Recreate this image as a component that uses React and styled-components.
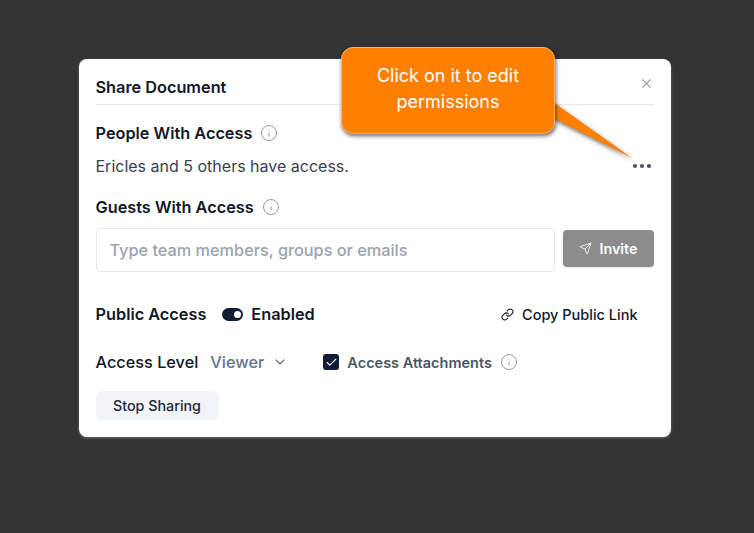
import React from 'react'
import styled, { createGlobalStyle } from 'styled-components'
import { X, Info, Ellipsis, Send, Link, ChevronDown, Check } from 'lucide-react'

const GlobalStyle = createGlobalStyle`
    html, body {
        margin: 0;
        height: 100%;
        background: #333333;
        font-family: Inter, "Liberation Sans", sans-serif;
    }
`

const Page = styled.div`
    width: 754px;
    height: 533px;
    overflow: hidden;
    box-sizing: border-box;
    padding: 59px 0 0 79px;
`
const Card = styled.div`
    position: relative;
    box-sizing: border-box;
    width: 592px;
    height: 377.5px;
    padding: 0 17.5px 16px 16.5px;
    background: #fff;
    border-radius: 8px;
    color: #111827;
    box-shadow: 0 1px 3px rgba(255, 255, 255, 0.3);
`

// --------- header -----------
const Header = styled.div`
    height: 46px;
    display: flex;
    justify-content: space-between;
    align-items: center;
    padding-top: 11px;
    padding-bottom: 1px;
    box-sizing: border-box;
    border-bottom: 1px solid #e5e7eb;
`
const Title = styled.h2`
    margin: 0;
    font-size: 16.3px;
    line-height: 24px;
    font-weight: 600;
    color: #111827;
`
const Close = styled.span`
    display: flex;
    color: #9ca3af;
    margin-top: -7px;
`

// --------- sections -----------
const SectionRow = styled.div`
    display: flex;
    align-items: center;
    height: 24px;
    margin-top: ${p => p.$top}px;
    justify-content: ${p => p.$spread ? 'space-between' : 'flex-start'};
`
const Label = styled.span`
    font-size: 16.3px;
    font-weight: 600;
    line-height: 24px;
    color: #111827;
`
const InfoIcon = styled.span`
    display: flex;
    color: #8f95a0;
    margin-left: 8px;
`
const Body = styled.span`
    font-size: 16px;
    line-height: 24px;
    color: #374151;
`
const More = styled.span`
    display: flex;
    color: #4b5563;
`

// --------- invite -----------
const InviteRow = styled.div`
    display: flex;
    align-items: flex-start;
    gap: 8px;
    margin-top: 9px;
`
const Input = styled.div`
    box-sizing: border-box;
    width: 459px;
    height: 44px;
    padding: 0 13px;
    display: flex;
    align-items: center;
    border: 1px solid #e5e7eb;
    border-radius: 4px;
    font-size: 16.3px;
    color: #9ca3af;
    font-weight: 500;
`
const InviteButton = styled.div`
    box-sizing: border-box;
    width: 91px;
    height: 37px;
    margin-top: 2px;
    display: flex;
    align-items: center;
    justify-content: center;
    gap: 8px;
    background: #8c8c8c;
    color: #fff;
    font-size: 14.3px;
    font-weight: 600;
    border-radius: 4px;
    box-shadow: 0 1px 2px rgba(0, 0, 0, 0.1);
`

// --------- public access -----------
const Group = styled.div`
    display: flex;
    align-items: center;
`
const Toggle = styled.span`
    position: relative;
    display: block;
    width: 21px;
    height: 13px;
    margin: 0 8px 0 16px;
    border-radius: 7px;
    background: #111d35;
    &::after {
        content: '';
        position: absolute;
        top: 3px;
        right: 2px;
        width: 7px;
        height: 7px;
        border-radius: 50%;
        background: #fff;
    }
`
const CopyLink = styled.div`
    display: flex;
    align-items: center;
    gap: 8px;
    margin-right: 16px;
    font-size: 14.5px;
    font-weight: 500;
    color: #111827;
`

// --------- access level -----------
const LevelLabel = styled.span`
    font-size: 16.3px;
    font-weight: 500;
    color: #111827;
`
const Viewer = styled.span`
    display: flex;
    align-items: center;
    gap: 8px;
    margin-left: 12px;
    font-size: 16.3px;
    font-weight: 500;
    color: #64748b;
`
const CheckBox = styled.span`
    display: flex;
    align-items: center;
    justify-content: center;
    width: 16px;
    height: 16px;
    margin: 0 8px 0 35px;
    border-radius: 3px;
    background: #111d35;
    color: #fff;
`
const CheckLabel = styled.span`
    font-size: 14.5px;
    font-weight: 600;
    color: #4b5563;
`
const StopButton = styled.div`
    display: inline-flex;
    align-items: center;
    justify-content: center;
    width: 123px;
    height: 29px;
    margin-top: 17px;
    background: #f1f5f9;
    border-radius: 6px;
    font-size: 14.3px;
    font-weight: 500;
    color: #1e293b;
`

// --------- callout -----------
const Callout = styled.div`
    position: absolute;
    left: 262px;
    top: -12px;
    width: 214px;
    height: 87px;
    box-sizing: border-box;
    padding: 15px 20px 0;
    background: #ff8000;
    border: 1px solid #ffb366;
    border-radius: 12px;
    box-shadow: 1px 2px 4px rgba(0, 0, 0, 0.6);
    color: #fff;
    font-size: 18px;
    line-height: 26px;
    text-align: center;
`
const Tail = styled.svg`
    position: absolute;
    left: 474px;
    top: 43px;
    overflow: visible;
    filter: drop-shadow(1px 2px 2px rgba(0, 0, 0, 0.55));
`

const App = () => {
  return (
    <Page>
        <GlobalStyle />
        <Card>
            <Header>
                <Title>Share Document</Title>
                <Close><X size={15} strokeWidth={1.75} /></Close>
            </Header>
            <SectionRow $top={16}>
                <Label>People With Access</Label>
                <InfoIcon><Info size={18} strokeWidth={1.25} /></InfoIcon>
            </SectionRow>
            <SectionRow $top={9} $spread>
                <Body>Ericles and 5 others have access.</Body>
                <More><Ellipsis size={24} strokeWidth={2.2} /></More>
            </SectionRow>
            <SectionRow $top={17}>
                <Label>Guests With Access</Label>
                <InfoIcon><Info size={18} strokeWidth={1.25} /></InfoIcon>
            </SectionRow>
            <InviteRow>
                <Input>Type team members, groups or emails</Input>
                <InviteButton><Send size={13} strokeWidth={1.5} />Invite</InviteButton>
            </InviteRow>
            <SectionRow $top={30} $spread>
                <Group>
                    <Label>Public Access</Label>
                    <Toggle />
                    <Label>Enabled</Label>
                </Group>
                <CopyLink><Link size={13} strokeWidth={2} />Copy Public Link</CopyLink>
            </SectionRow>
            <SectionRow $top={24}>
                <LevelLabel>Access Level</LevelLabel>
                <Viewer>Viewer<ChevronDown size={16} strokeWidth={1.75} /></Viewer>
                <CheckBox><Check size={13} strokeWidth={2} /></CheckBox>
                <CheckLabel>Access Attachments</CheckLabel>
                <InfoIcon><Info size={18} strokeWidth={1.25} /></InfoIcon>
            </SectionRow>
            <StopButton>Stop Sharing</StopButton>
            <Tail width="80" height="60" viewBox="0 0 80 60">
                <polygon points="0,0 79,56 0,16" fill="#ff8000" />
            </Tail>
            <Callout>Click on it to edit permissions</Callout>
        </Card>
    </Page>
  )
}

export default App
